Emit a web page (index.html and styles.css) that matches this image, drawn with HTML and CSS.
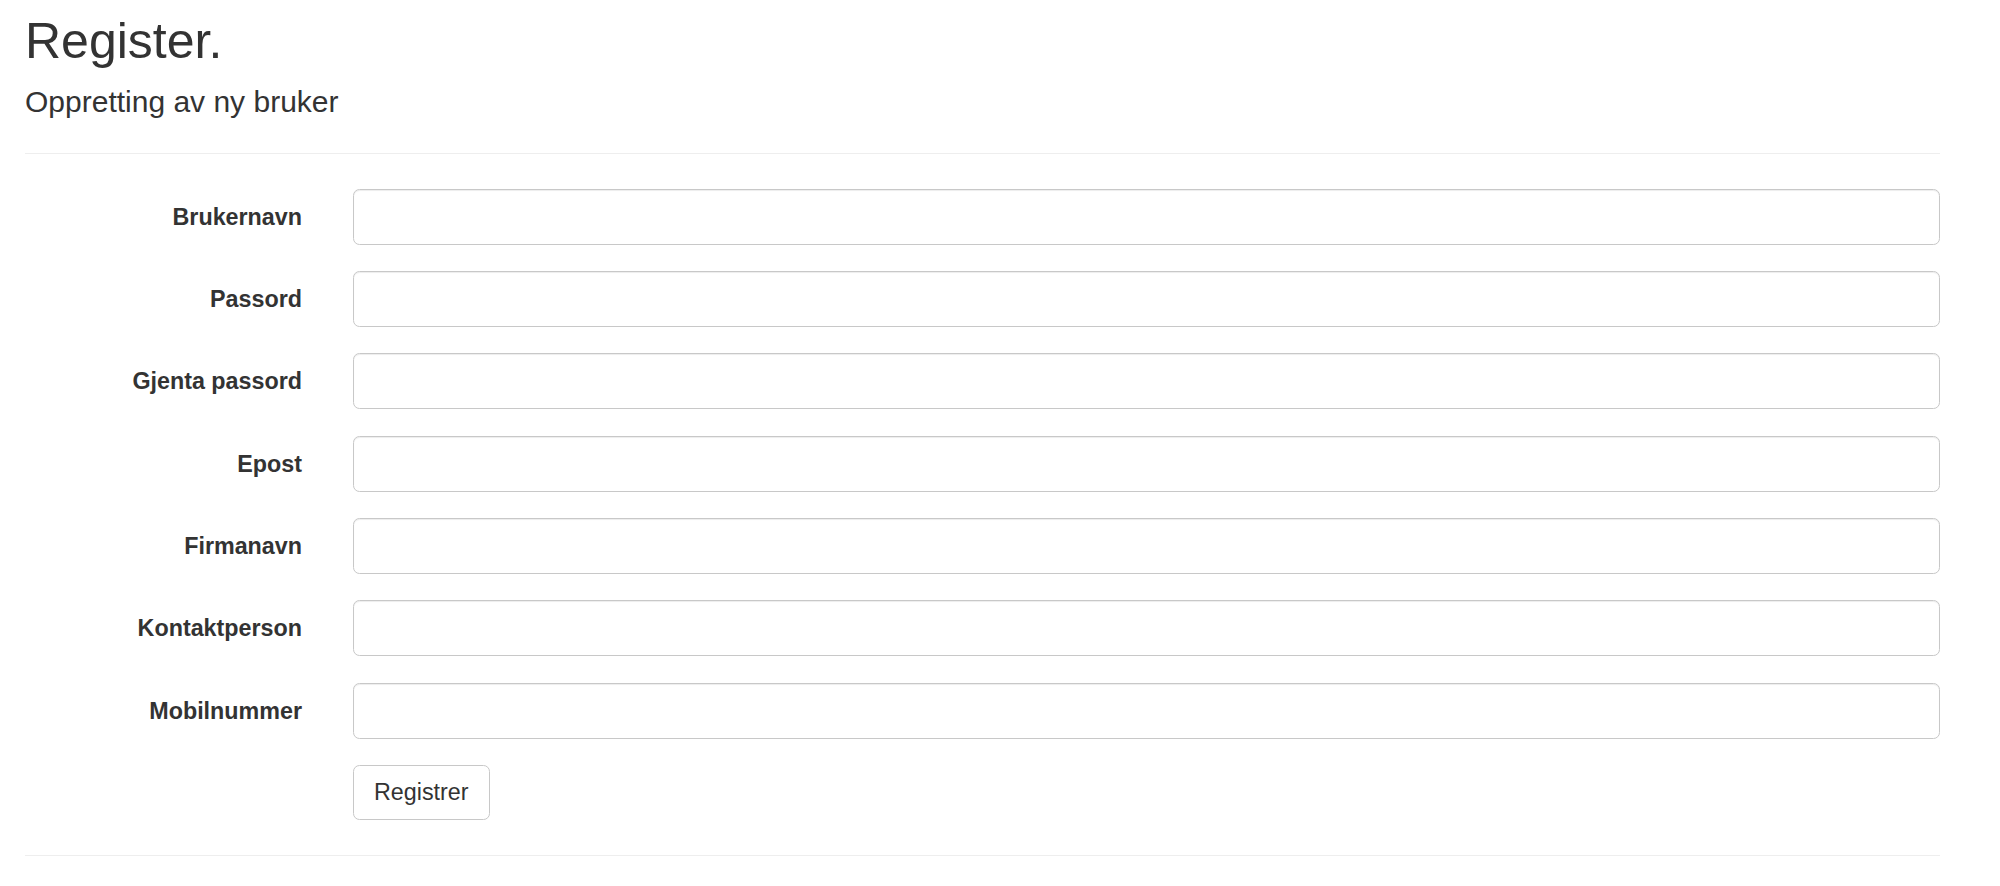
FILE: index.html
```html
<!DOCTYPE html>
<html lang="no">
<head>
    <meta charset="utf-8">
    <meta name="viewport" content="width=device-width, initial-scale=1">
    <title>Register</title>
    <link rel="stylesheet" href="styles.css">
</head>
<body>

<div class="container">
    <h2 class="title">Register.</h2>
    <h4 class="subtitle">Oppretting av ny bruker</h4>
    <hr>

    <form class="register-form" onsubmit="return false">
        <div class="form-group">
            <label class="control-label" for="username">Brukernavn</label>
            <input class="form-control" id="username" name="username" type="text">
        </div>
        <div class="form-group">
            <label class="control-label" for="password">Passord</label>
            <input class="form-control" id="password" name="password" type="password">
        </div>
        <div class="form-group">
            <label class="control-label" for="confirm">Gjenta passord</label>
            <input class="form-control" id="confirm" name="confirm" type="password">
        </div>
        <div class="form-group">
            <label class="control-label" for="email">Epost</label>
            <input class="form-control" id="email" name="email" type="email">
        </div>
        <div class="form-group">
            <label class="control-label" for="company">Firmanavn</label>
            <input class="form-control" id="company" name="company" type="text">
        </div>
        <div class="form-group">
            <label class="control-label" for="contact">Kontaktperson</label>
            <input class="form-control" id="contact" name="contact" type="text">
        </div>
        <div class="form-group">
            <label class="control-label" for="mobile">Mobilnummer</label>
            <input class="form-control" id="mobile" name="mobile" type="tel">
        </div>
        <div class="form-group">
            <span></span>
            <div><button class="btn" type="submit">Registrer</button></div>
        </div>
    </form>
    <hr>
</div>

</body>
</html>
```

FILE: styles.css
```css
body {
    margin: 0;
    background: #fff;
    color: #333;
    font-family: "Liberation Sans", Arial, Helvetica, sans-serif;
    font-size: 23.3px;
    line-height: 1.42857;
}

.container {
    padding: 0 60px 0 25px;
}

.title {
    margin: 13.5px 0 16.3px;
    font-size: 50px;
    font-weight: 500;
    line-height: 1.1;
}

.subtitle {
    margin: 0;
    font-size: 30px;
    font-weight: 500;
    line-height: 1.1;
}

hr {
    margin: 35.5px 0 34.5px;
    border: 0;
    border-top: 1px solid #eee;
}

.register-form .form-group {
    display: grid;
    grid-template-columns: 277px 1fr;
    column-gap: 51px;
    margin-bottom: 26.3px;
}

.register-form .control-label {
    padding-top: 12px;
    text-align: right;
    font-weight: bold;
}

.form-control {
    display: block;
    width: 100%;
    height: 56px;
    box-sizing: border-box;
    padding: 10px 20px;
    font: inherit;
    color: #555;
    background: #fff;
    border: 1px solid #c8c8c8;
    border-radius: 6.5px;
    box-shadow: inset 0 1px 1px rgba(0, 0, 0, 0.075);
}

.btn {
    height: 55px;
    box-sizing: border-box;
    padding: 10px 20px;
    font: inherit;
    line-height: 1.42857;
    color: #333;
    background: #fff;
    border: 1px solid #c8c8c8;
    border-radius: 6.5px;
    cursor: pointer;
}
```
